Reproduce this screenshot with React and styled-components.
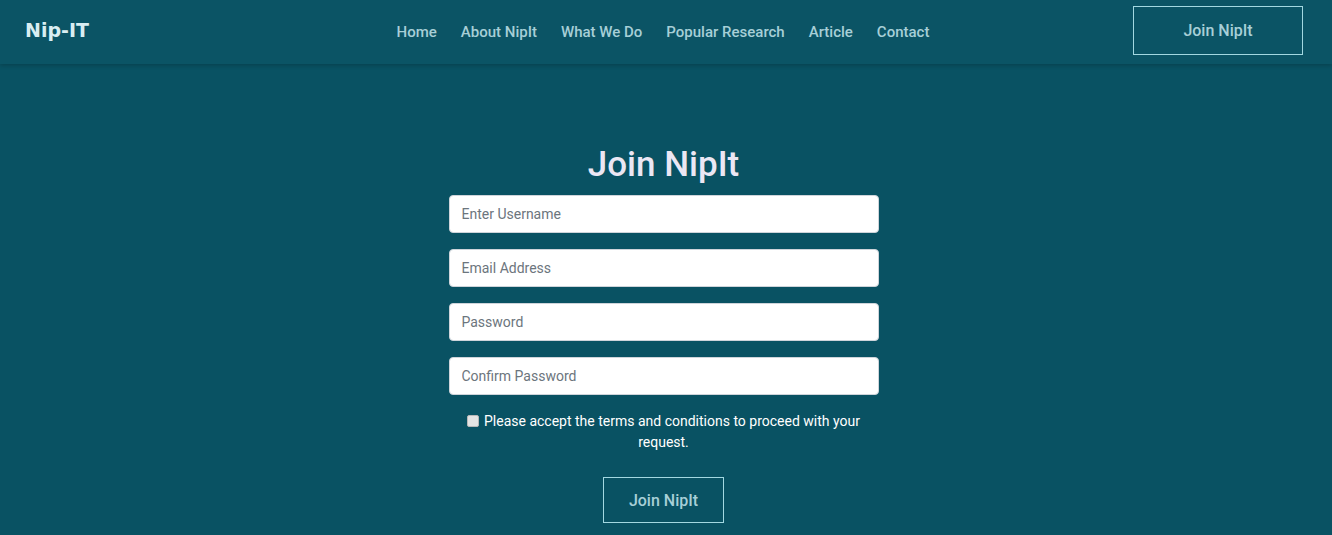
import styled, { createGlobalStyle } from 'styled-components'

const GlobalStyle = createGlobalStyle`
  * { box-sizing: border-box; }
  html, body {
    margin: 0;
    padding: 0;
    background: #095263;
    font-family: Roboto, "Liberation Sans", Arial, sans-serif;
  }
`;

const Page = styled.div`
  min-height: 535px;
  background: #095263;
`;

const Header = styled.header`
  height: 64px;
  display: grid;
  grid-template-columns: 1fr auto 1fr;
  align-items: center;
  padding: 0 29px 0 25px;
  background: #0b5465;
  box-shadow: 0 2px 4px rgba(0, 0, 0, 0.18);
  position: relative;
`;

const Logo = styled.div`
  font-family: "DejaVu Sans", Verdana, sans-serif;
  font-size: 19px;
  font-weight: 700;
  color: #d9eef2;
  margin-top: -4px;
`;

const Nav = styled.nav`
  display: flex;
  gap: 24px;
  margin-left: -2px;
`;

const NavLink = styled.a`
  font-size: 15px;
  font-weight: 500;
  color: #a7cfd7;
  text-decoration: none;
  cursor: pointer;
`;

const OutlineButton = styled.button`
  width: ${p => p.$w}px;
  height: ${p => p.$h}px;
  background: transparent;
  border: 1px solid #a3d8e1;
  color: #a7cfd7;
  font-family: inherit;
  font-size: 16px;
  font-weight: 500;
  cursor: pointer;
`;

const HeaderRight = styled.div`
  display: flex;
  justify-content: flex-end;
  margin-top: -4px;
`;

const Main = styled.main`
  display: flex;
  flex-direction: column;
  align-items: center;
  padding: 80px 5px 0 0;
`;

const Title = styled.h1`
  margin: 0 0 10px;
  font-size: 35px;
  line-height: 41px;
  font-weight: 500;
  color: #ebe7f4;
`;

const Form = styled.form`
  width: 430px;
  display: flex;
  flex-direction: column;
  align-items: center;
  gap: 16px;
`;

const Input = styled.input`
  width: 100%;
  height: 38px;
  padding: 0 12px;
  border: 1px solid #ced4da;
  border-radius: 4px;
  background: #fff;
  font-family: inherit;
  font-size: 14px;
  color: #495057;
  outline: none;

  &::placeholder {
    color: #6c757d;
  }
`;

const Terms = styled.label`
  display: block;
  text-align: center;
  font-size: 14px;
  line-height: 21px;
  color: #ffffff;
  padding: 0 10px;
  margin-bottom: 8px;
`;

const CheckBox = styled.input`
  appearance: none;
  margin: 0 5px 0 0;
  width: 12px;
  height: 12px;
  vertical-align: -1px;
  background: #e4e4e4;
  border: 1px solid #b8b8b8;
  border-radius: 2px;
  cursor: pointer;

  &:checked {
    background: #0075ff;
    border-color: #0075ff;
  }
`;

function App() {
  return (
    <Page>
      <GlobalStyle />
      <Header>
        <Logo>Nip-IT</Logo>
        <Nav>
          <NavLink>Home</NavLink>
          <NavLink>About NipIt</NavLink>
          <NavLink>What We Do</NavLink>
          <NavLink>Popular Research</NavLink>
          <NavLink>Article</NavLink>
          <NavLink>Contact</NavLink>
        </Nav>
        <HeaderRight>
          <OutlineButton $w={170} $h={49}>Join NipIt</OutlineButton>
        </HeaderRight>
      </Header>

      <Main>
        <Title>Join NipIt</Title>
        <Form onSubmit={e => e.preventDefault()}>
          <Input type="text" placeholder="Enter Username" />
          <Input type="email" placeholder="Email Address" />
          <Input type="password" placeholder="Password" />
          <Input type="password" placeholder="Confirm Password" />
          <Terms>
            <CheckBox type="checkbox" />
            Please accept the terms and conditions to proceed with your request.
          </Terms>
          <OutlineButton $w={121} $h={46} type="submit">Join NipIt</OutlineButton>
        </Form>
      </Main>
    </Page>
  );
}

export default App;
